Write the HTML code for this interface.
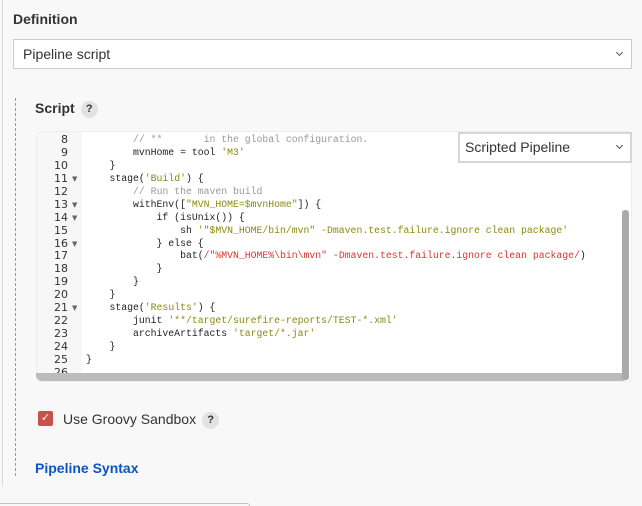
<!DOCTYPE html>
<html><head><style>
*{box-sizing:border-box;margin:0;padding:0}
body{width:642px;height:506px;background:#f8f8f8;font-family:"Liberation Sans",sans-serif;position:relative;overflow:hidden;color:#333}
.lb{position:absolute;left:2px;top:0;width:1px;height:485px;background:#d8d8d8}
.dash{position:absolute;left:15px;top:98px;height:378px;border-left:1px dashed #999}
.lbl{position:absolute;font-weight:bold;font-size:14px;color:#333}
.sel{position:absolute;left:13px;top:39px;width:619px;height:30px;background:#fff;border:1px solid #ccc;font-size:14px;padding:6px 9px}
.chev{position:absolute;right:9px;top:10px;width:5px;height:5px;border-right:1.2px solid #555;border-bottom:1.2px solid #555;transform:rotate(45deg)}
.q{display:inline-block;width:17px;height:17px;border-radius:50%;background:#e2e2e2;font-size:11px;text-align:center;line-height:17px;font-weight:bold;color:#333;vertical-align:middle;margin-left:6px}
.ed{position:absolute;left:36px;top:131px;width:596px;height:251px;background:#fff;border-radius:6px;overflow:hidden;border:1px solid #eee}
.gut{position:absolute;left:0;top:0;width:45px;height:100%;background:#f7f7f7}
.code{position:absolute;left:0;top:2px;font-family:"Liberation Mono",monospace;font-size:9.8px;color:#222}
.code div{height:12.95px;line-height:12.95px;white-space:pre;position:relative;padding-left:49px}
.n{position:absolute;left:4px;top:0;width:45px;color:#333;font-family:"DejaVu Sans",sans-serif;font-size:11px;line-height:12.95px}
.n i{display:inline-block;width:27px;text-align:right;font-style:normal}
.n b{font-weight:normal;font-size:7px;color:#666;margin-left:4px;vertical-align:1px}
.c{color:#999}.s{color:#8a8a10}.r{color:#d33}
.dd{position:absolute;left:458px;top:132px;width:174px;height:31px;background:#fff;border:2px solid #d6d6d6;font-size:14px;padding:5px 5px}
.vs{position:absolute;left:622px;top:210px;width:7px;height:170px;background:#aaa;border-radius:3px}
.hs{position:absolute;left:36px;top:373px;width:592px;height:8px;background:#bbb;border-radius:0 0 6px 6px}
.cb{position:absolute;left:38px;top:411px;width:15px;height:15px;background:#c9514b;border-radius:2px;color:#fff;font-size:11px;text-align:center;line-height:15px}
a{position:absolute;left:35px;top:460px;font-weight:bold;font-size:14px;color:#0b55c0;text-decoration:none}
.bt{position:absolute;left:0;top:503px;width:250px;height:3px;border-top:1px solid #a8d0b8;border-right:1px solid #a8d0b8;border-radius:0 4px 0 0}
</style></head><body>
<div class="lb"></div>
<div class="lbl" style="left:13px;top:11px">Definition</div>
<div class="sel">Pipeline script<span class="chev"></span></div>
<div class="dash"></div>
<div class="lbl" style="left:35px;top:100px">Script<span class="q">?</span></div>
<div class="ed"><div class="gut"></div><div class="code">
<div><span class="n"><i>8</i></span>        <span class="c">// **       in the global configuration.</span></div>
<div><span class="n"><i>9</i></span>        mvnHome = tool <span class="s">'M3'</span></div>
<div><span class="n"><i>10</i></span>    }</div>
<div><span class="n"><i>11</i><b>▼</b></span>    stage(<span class="s">'Build'</span>) {</div>
<div><span class="n"><i>12</i></span>        <span class="c">// Run the maven build</span></div>
<div><span class="n"><i>13</i><b>▼</b></span>        withEnv([<span class="s">"MVN_HOME=$mvnHome"</span>]) {</div>
<div><span class="n"><i>14</i><b>▼</b></span>            if (isUnix()) {</div>
<div><span class="n"><i>15</i></span>                sh <span class="s">'"$MVN_HOME/bin/mvn" -Dmaven.test.failure.ignore clean package'</span></div>
<div><span class="n"><i>16</i><b>▼</b></span>            } else {</div>
<div><span class="n"><i>17</i></span>                bat(<span class="r">/"%MVN_HOME%\bin\mvn" -Dmaven.test.failure.ignore clean package/</span>)</div>
<div><span class="n"><i>18</i></span>            }</div>
<div><span class="n"><i>19</i></span>        }</div>
<div><span class="n"><i>20</i></span>    }</div>
<div><span class="n"><i>21</i><b>▼</b></span>    stage(<span class="s">'Results'</span>) {</div>
<div><span class="n"><i>22</i></span>        junit <span class="s">'**/target/surefire-reports/TEST-*.xml'</span></div>
<div><span class="n"><i>23</i></span>        archiveArtifacts <span class="s">'target/*.jar'</span></div>
<div><span class="n"><i>24</i></span>    }</div>
<div><span class="n"><i>25</i></span>}</div>
<div><span class="n"><i>26</i></span></div>
</div></div>
<div class="hs"></div>
<div class="vs"></div>
<div class="dd">Scripted Pipeline<span class="chev" style="top:9px;right:8px"></span></div>
<div class="cb">✓</div>
<div class="lbl" style="left:63px;top:411px;font-weight:normal">Use Groovy Sandbox<span class="q">?</span></div>
<a>Pipeline Syntax</a>
<div class="bt"></div>
</body></html>
